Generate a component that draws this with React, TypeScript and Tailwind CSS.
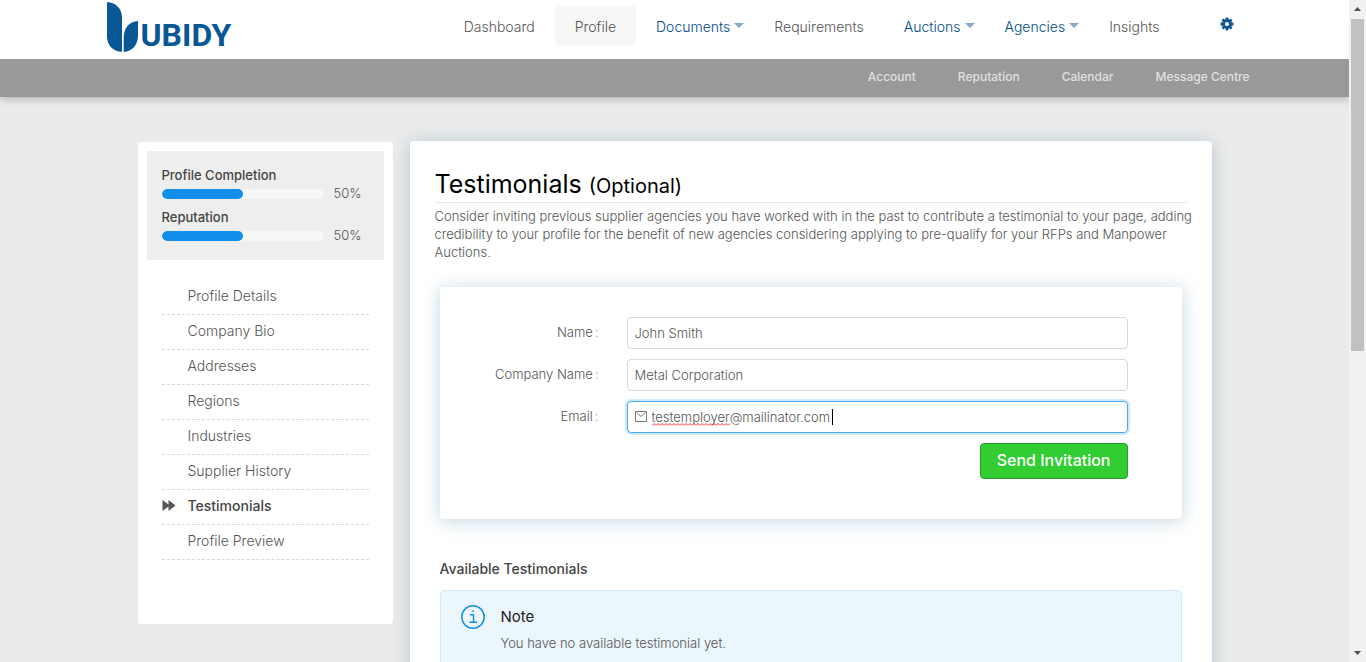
import React from "react";

const mainNav = [
  { label: "Dashboard" },
  { label: "Profile", active: true },
  { label: "Documents", menu: true },
  { label: "Requirements" },
  { label: "Auctions", menu: true },
  { label: "Agencies", menu: true },
  { label: "Insights" },
];

const subNav = ["Account", "Reputation", "Calendar", "Message Centre"];

const sections = [
  "Profile Details",
  "Company Bio",
  "Addresses",
  "Regions",
  "Industries",
  "Supplier History",
  "Testimonials",
  "Profile Preview",
];

function Logo() {
  return (
    <a href="#" aria-label="Ubidy home" className="flex h-[50px] items-end text-[#0a5796]">
      <svg viewBox="0 0 31 50" className="h-[50px] w-[31px]" fill="currentColor" aria-hidden="true">
        <path d="M0 0C8 .5 15 6 15 15.500V49.800C5.500 49.500 0 43 0 34Z" />
        <path d="M31 19V33.500C31 43 25 49.500 16.700 50V35C17 26 22 19.500 31 19Z" />
      </svg>
      <span className="ml-[3px] font-[Roboto] text-[32px] leading-[34px] font-bold">UBIDY</span>
    </a>
  );
}

function GearIcon() {
  return (
    <svg viewBox="0 0 14 14" className="h-[14px] w-[14px]" aria-hidden="true">
      <g fill="currentColor">
        {[0, 45, 90, 135].map((angle) => (
          <rect key={angle} x="5.600" y="0.500" width="2.800" height="13" rx="0.300" transform={`rotate(${angle} 7 7)`} />
        ))}
        <circle cx="7" cy="7" r="4.900" />
      </g>
      <circle cx="7" cy="7" r="2.100" fill="#fff" />
    </svg>
  );
}

function Header() {
  return (
    <header className="relative z-10 shadow-[0_2px_8px_rgba(0,0,0,0.25)]">
      <div className="bg-white">
        <div className="mx-auto flex h-[59px] max-w-[1170px] items-start justify-between pt-[2px] pr-[26px] pl-[17px]">
          <Logo />
          <div className="flex items-center pt-1">
            <nav className="flex text-[14px] font-light text-[#555]">
              {mainNav.map((item) => (
                <a
                  key={item.label}
                  href="#"
                  className={
                    item.active
                      ? "flex h-10 items-center rounded bg-[#f7f7f7] px-5"
                      : item.menu
                        ? "flex h-10 items-center gap-1 pr-[10px] pl-5 text-[#004a8a]"
                        : "flex h-10 items-center px-5"
                  }
                >
                  {item.label}
                  {item.menu && (
                    <svg viewBox="0 0 10 5" className="mb-[2px] h-[5px] w-[10px] fill-[#84aacb]" aria-hidden="true">
                      <path d="M0 0H10L5 5Z" />
                    </svg>
                  )}
                </a>
              ))}
            </nav>
            <button type="button" aria-label="Settings" className="mb-1 ml-10 text-[#0a5796]">
              <GearIcon />
            </button>
          </div>
        </div>
      </div>
      <div className="bg-[#999]">
        <nav className="mx-auto flex h-[38px] max-w-[1170px] items-center justify-end gap-[42px] pr-[10px] pb-[3px] text-[12px] font-medium text-[#e0e0e0]">
          {subNav.map((label) => (
            <a key={label} href="#">
              {label}
            </a>
          ))}
        </nav>
      </div>
    </header>
  );
}

function Meter({ label, value }: { label: string; value: number }) {
  return (
    <div className="h-[42px]">
      <div className="text-[13px] leading-[18px] font-medium text-[#444]">{label}</div>
      <div className="flex gap-[10px]">
        <div className="mt-[5px] h-[10px] w-[162px] overflow-hidden rounded-full bg-[#f7f7f7]">
          <div className="h-full rounded-full bg-[#108ee9]" style={{ width: `${value}%` }} />
        </div>
        <span className="text-[13px] leading-[18px] font-light">{value}%</span>
      </div>
    </div>
  );
}

function Sidebar() {
  return (
    <aside className="mt-px min-h-[482px] w-[255px] shrink-0 rounded bg-white p-[9px]">
      <div className="bg-[#eee] px-[15px] pt-[15px] pb-[10px]">
        <Meter label="Profile Completion" value={50} />
        <Meter label="Reputation" value={50} />
      </div>
      <ul className="mt-5 px-[15px] text-[14px]">
        {sections.map((label) => {
          const current = label === "Testimonials";
          return (
            <li key={label} className="border-b border-dashed border-[#d9d9d9]">
              <a
                href="#"
                className={
                  current
                    ? "flex h-[34px] items-center pb-1 font-medium text-[#444]"
                    : "flex h-[34px] items-center pb-1 font-light"
                }
              >
                <span className="w-[26px]">
                  {current && (
                    <svg viewBox="0 0 14 11" className="h-[11px] w-[14px] fill-[#555]" aria-hidden="true">
                      <path d="M.5 0L6.500 4.600V0L13.500 5.500L6.500 11V6.400L.5 11Z" />
                    </svg>
                  )}
                </span>
                {label}
              </a>
            </li>
          );
        })}
      </ul>
    </aside>
  );
}

function Row({ id, label, children }: { id: string; label: string; children: React.ReactNode }) {
  return (
    <div className="flex h-8 gap-7">
      <label htmlFor={id} className="w-[159px] shrink-0 text-right leading-[30px]">
        {label}
        <span className="ml-[2px] text-[#888]">:</span>
      </label>
      <div className="relative flex-1">{children}</div>
    </div>
  );
}

function InviteForm() {
  return (
    <form
      onSubmit={(e) => e.preventDefault()}
      className="mx-[5px] mt-[26px] flex flex-col gap-[10px] rounded bg-white pt-[30px] pr-[54px] pb-10 text-[13px] font-light shadow-[0_2px_18px_rgba(10,87,130,0.25)]"
    >
      <Row id="name" label="Name">
        <input id="name" defaultValue="John Smith" className="h-full w-full rounded border border-[#d9d9d9] px-[7px]" />
      </Row>
      <Row id="company" label="Company Name">
        <input
          id="company"
          defaultValue="Metal Corporation"
          className="h-full w-full rounded border border-[#d9d9d9] px-[7px]"
        />
      </Row>
      <Row id="email" label="Email">
        <input
          id="email"
          type="email"
          defaultValue="testemployer@mailinator.com"
          className="h-full w-full rounded border border-[#49a9ee] pr-[7px] pl-6 shadow-[0_0_0_2px_rgba(16,142,233,0.2)] outline-none"
        />
        <svg viewBox="0 0 12 11" className="absolute top-[10px] left-2 h-[11px] w-3" fill="none" stroke="#777" aria-hidden="true">
          <path d="M.5.500H11.500V10.500H.5ZM1.500 1.500L6 5.500L10.500 1.500" />
        </svg>
        <svg className="absolute top-[22px] left-[25px] h-[3px] w-[78px]" fill="none" stroke="#f22" aria-hidden="true">
          <defs>
            <pattern id="wave" width="4" height="3" patternUnits="userSpaceOnUse">
              <path d="M0 2.500L2 .5L4 2.500" />
            </pattern>
          </defs>
          <rect width="78" height="3" fill="url(#wave)" stroke="none" />
        </svg>
        <span className="absolute top-2 left-[205px] h-4 w-px bg-black" />
      </Row>
      <button
        type="submit"
        className="h-9 self-end rounded border border-[#299e2c] bg-[#32cd32] px-4 pb-[2px] text-[16px] font-medium text-white"
      >
        Send Invitation
      </button>
    </form>
  );
}

function Note() {
  return (
    <div className="mx-[5px] mt-[11px] flex gap-4 rounded border border-[#d2eafb] bg-[#ebf6fd] px-5 pt-[13px] pb-5">
      <svg viewBox="0 0 24 24" className="mt-px h-6 w-6" fill="none" stroke="#108ee9" aria-hidden="true">
        <circle cx="12" cy="12" r="11.200" strokeWidth="1.500" />
        <path d="M9 9.700H12.500V17M8.500 17.300H16M11.300 6H12.900" strokeWidth="1.400" />
      </svg>
      <div>
        <div className="text-[15px] leading-[26px] text-[#222]">Note</div>
        <p className="text-[13px] leading-[26px] font-light">You have no available testimonial yet.</p>
      </div>
    </div>
  );
}

function ScrollBar() {
  return (
    <div className="flex w-[17px] shrink-0 flex-col items-center justify-between bg-[#f1f1f1]" aria-hidden="true">
      <svg viewBox="0 0 17 17" className="h-[17px] w-[17px] fill-[#505050]">
        <path d="M5 11L8.500 7L12 11Z" />
      </svg>
      <div className="mt-[2px] w-[13px] flex-1">
        <div className="h-[53%] bg-[#c1c1c1]" />
      </div>
      <svg viewBox="0 0 17 17" className="h-[17px] w-[17px] fill-[#505050]">
        <path d="M5 6L8.500 10L12 6Z" />
      </svg>
    </div>
  );
}

export default function App() {
  return (
    <div className="flex h-screen font-[Inter,'Open_Sans',sans-serif] text-[#555]">
      <div className="min-w-0 flex-1 overflow-y-auto bg-[#ebebeb] [scrollbar-width:none]">
        <Header />
        <div className="mx-auto mt-11 flex max-w-[1074px] items-start gap-[17px]">
          <Sidebar />
          <main className="min-w-0 flex-1 rounded bg-white px-[25px] pt-[26px] pb-10 shadow-[0_2px_18px_rgba(10,87,140,0.25)]">
            <h1 className="border-b border-[#e9e9e9] text-[25px] leading-[35px] text-black">
              Testimonials <span className="text-[20px] leading-none">(Optional)</span>
            </h1>
            <p className="mt-1 -mr-3 text-[13px] leading-[18px] font-light">
              Consider inviting previous supplier agencies you have worked with in the past to contribute a testimonial to
              your page, adding credibility to your profile for the benefit of new agencies considering applying to
              pre-qualify for your RFPs and Manpower Auctions.
            </p>
            <InviteForm />
            <h2 className="mx-[5px] mt-10 text-[14px] leading-5 font-medium text-[#444]">Available Testimonials</h2>
            <Note />
          </main>
        </div>
      </div>
      <ScrollBar />
    </div>
  );
}
